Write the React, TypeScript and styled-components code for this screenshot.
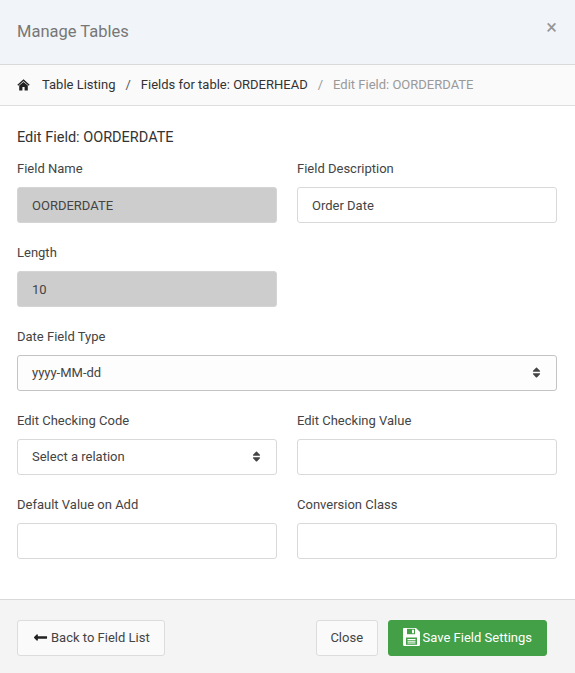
import styled, { createGlobalStyle } from "styled-components";
import { FaLongArrowAltLeft, FaSort } from "react-icons/fa";

const GlobalStyle = createGlobalStyle`
  html, body {
    margin: 0;
    padding: 0;
    background: #fff;
  }
  * {
    box-sizing: border-box;
  }
`;

const Modal = styled.div`
  width: 575px;
  height: 673px;
  display: flex;
  flex-direction: column;
  font-family: Roboto, "Liberation Sans", sans-serif;
  font-size: 13px;
  color: #3e3e3e;
  overflow: hidden;
`;

const Header = styled.header`
  height: 65px;
  flex: none;
  padding: 0 17px;
  background: #f1f4f8;
  border-bottom: 1px solid #d9d9d9;
  display: flex;
  justify-content: space-between;
`;

const ModalTitle = styled.h1`
  margin: 22px 0 0;
  font-size: 16.5px;
  line-height: 20px;
  font-weight: 400;
  color: #777;
`;

const CloseIcon = styled.span`
  margin: 17px 1px 0 0;
  font-size: 20px;
  line-height: 20px;
  font-weight: 400;
  color: #959595;
`;

const Breadcrumb = styled.nav`
  height: 41px;
  flex: none;
  padding: 0 17px 1px;
  background: #fafafa;
  border-bottom: 1px solid #dedede;
  display: flex;
  align-items: center;
  color: #333;
`;

const HomeLink = styled.span`
  display: flex;
  width: 25px;
`;

const Separator = styled.span<{ $muted?: boolean }>`
  margin: 0 10px;
  color: ${(props) => (props.$muted ? "#999" : "#555")};
`;

const Current = styled.span`
  color: #999;
`;

const Body = styled.main`
  flex: 1;
  padding: 23px 18px 0 17px;
`;

const FormTitle = styled.h2`
  margin: 0 0 13px;
  font-size: 14.5px;
  line-height: 17px;
  font-weight: 400;
  color: #333;
`;

const Row = styled.div`
  display: grid;
  grid-template-columns: 260px 260px;
  column-gap: 20px;
  margin-bottom: 20px;
`;

const WideRow = styled.div`
  margin-bottom: 20px;
`;

const Field = styled.div`
  display: flex;
  flex-direction: column;
`;

const Label = styled.label`
  height: 16px;
  margin: 2px 0 10px;
  font-size: 13px;
  line-height: 16px;
  color: #444;
`;

const Input = styled.input`
  width: 100%;
  height: 36px;
  padding: 0 14px;
  font-family: inherit;
  font-size: 13px;
  color: #444;
  background: #fff;
  border: 1px solid #d9d9d9;
  border-radius: 3px;
  outline: none;

  &:disabled {
    background: #cdcdcd;
    border-color: #d4d4d4;
    color: #444;
    opacity: 1;
  }
`;

const SelectBox = styled.div`
  position: relative;
  height: 36px;
`;

const Select = styled.select<{ $strong?: boolean }>`
  appearance: none;
  width: 100%;
  height: 36px;
  padding: 0 14px 2px;
  font-family: inherit;
  font-size: 13px;
  color: #444;
  background: ${(props) => (props.$strong ? "#fdfdfd" : "#fff")};
  border: 1px solid ${(props) => (props.$strong ? "#c4c4c4" : "#d9d9d9")};
  border-radius: 3px;
  outline: none;
`;

const SortIcon = styled.span`
  position: absolute;
  top: 11px;
  right: 14px;
  display: flex;
  font-size: 13px;
  color: #444;
  pointer-events: none;
`;

const Footer = styled.footer`
  height: 74px;
  flex: none;
  padding: 20px 28px 0 17px;
  background: #f4f4f4;
  border-top: 1px solid #d9d9d9;
  display: flex;
  justify-content: space-between;
  align-items: flex-start;
`;

const Actions = styled.div`
  display: flex;
  gap: 10px;
`;

const Button = styled.button`
  height: 36px;
  padding: 0 13.5px 2px;
  display: flex;
  align-items: center;
  font-family: inherit;
  font-size: 13px;
  color: #444;
  background: #fafafa;
  border: 1px solid #dcdcdc;
  border-radius: 3px;
`;

const BackButton = styled(Button)`
  padding: 0 14px 2px 15px;
  gap: 3px;

  svg {
    font-size: 15px;
    color: #222;
  }
`;

const SaveButton = styled(Button)`
  padding: 0 14px 2px;
  gap: 3px;
  color: #fff;
  background: #43a047;
  border-color: #43a047;
`;

function HomeIcon() {
  return (
    <svg width="13" height="12" viewBox="0 0 13 12" aria-hidden="true">
      <path d="M0.8 6.2 6.5 1.2 12.2 6.2" fill="none" stroke="#222" strokeWidth="1.3" />
      <path d="M2.2 6.6 6.5 3 10.8 6.6V11.5H7.6V8H5.4V11.5H2.2Z" fill="#222" />
    </svg>
  );
}

function SaveIcon() {
  return (
    <svg width="17" height="18" viewBox="0 0 17 18" aria-hidden="true">
      <path d="M0 1.2C0 .5.5 0 1.2 0H13L17 4V16.8C17 17.5 16.5 18 15.8 18H1.2C.5 18 0 17.500 0 16.800Z" fill="#fff" />
      <path d="M4 0.800H12V6.200H4Z" fill="#43a047" />
      <path d="M9 1.800H11V5.200H9Z" fill="#fff" />
      <path d="M3 9.500H14V16.800H3Z" fill="#43a047" />
      <path d="M4.500 11H12.500V12H4.500ZM4.500 12.800H12.500V13.800H4.500ZM4.500 14.600H12.500V15.600H4.500Z" fill="#fff" />
    </svg>
  );
}

export default function App() {
  return (
    <Modal>
      <GlobalStyle />
      <Header>
        <ModalTitle>Manage Tables</ModalTitle>
        <CloseIcon>×</CloseIcon>
      </Header>
      <Breadcrumb>
        <HomeLink>
          <HomeIcon />
        </HomeLink>
        <span>Table Listing</span>
        <Separator>/</Separator>
        <span>Fields for table: ORDERHEAD</span>
        <Separator $muted>/</Separator>
        <Current>Edit Field: OORDERDATE</Current>
      </Breadcrumb>
      <Body>
        <FormTitle>Edit Field: OORDERDATE</FormTitle>
        <Row>
          <Field>
            <Label>Field Name</Label>
            <Input disabled value="OORDERDATE" readOnly />
          </Field>
          <Field>
            <Label>Field Description</Label>
            <Input value="Order Date" readOnly />
          </Field>
        </Row>
        <Row>
          <Field>
            <Label>Length</Label>
            <Input disabled value="10" readOnly />
          </Field>
        </Row>
        <WideRow>
          <Field>
            <Label>Date Field Type</Label>
            <SelectBox>
              <Select $strong defaultValue="yyyy-MM-dd">
                <option>yyyy-MM-dd</option>
              </Select>
              <SortIcon>
                <FaSort />
              </SortIcon>
            </SelectBox>
          </Field>
        </WideRow>
        <Row>
          <Field>
            <Label>Edit Checking Code</Label>
            <SelectBox>
              <Select defaultValue="Select a relation">
                <option>Select a relation</option>
              </Select>
              <SortIcon>
                <FaSort />
              </SortIcon>
            </SelectBox>
          </Field>
          <Field>
            <Label>Edit Checking Value</Label>
            <Input />
          </Field>
        </Row>
        <Row>
          <Field>
            <Label>Default Value on Add</Label>
            <Input />
          </Field>
          <Field>
            <Label>Conversion Class</Label>
            <Input />
          </Field>
        </Row>
      </Body>
      <Footer>
        <BackButton>
          <FaLongArrowAltLeft />
          Back to Field List
        </BackButton>
        <Actions>
          <Button>Close</Button>
          <SaveButton>
            <SaveIcon />
            Save Field Settings
          </SaveButton>
        </Actions>
      </Footer>
    </Modal>
  );
}
